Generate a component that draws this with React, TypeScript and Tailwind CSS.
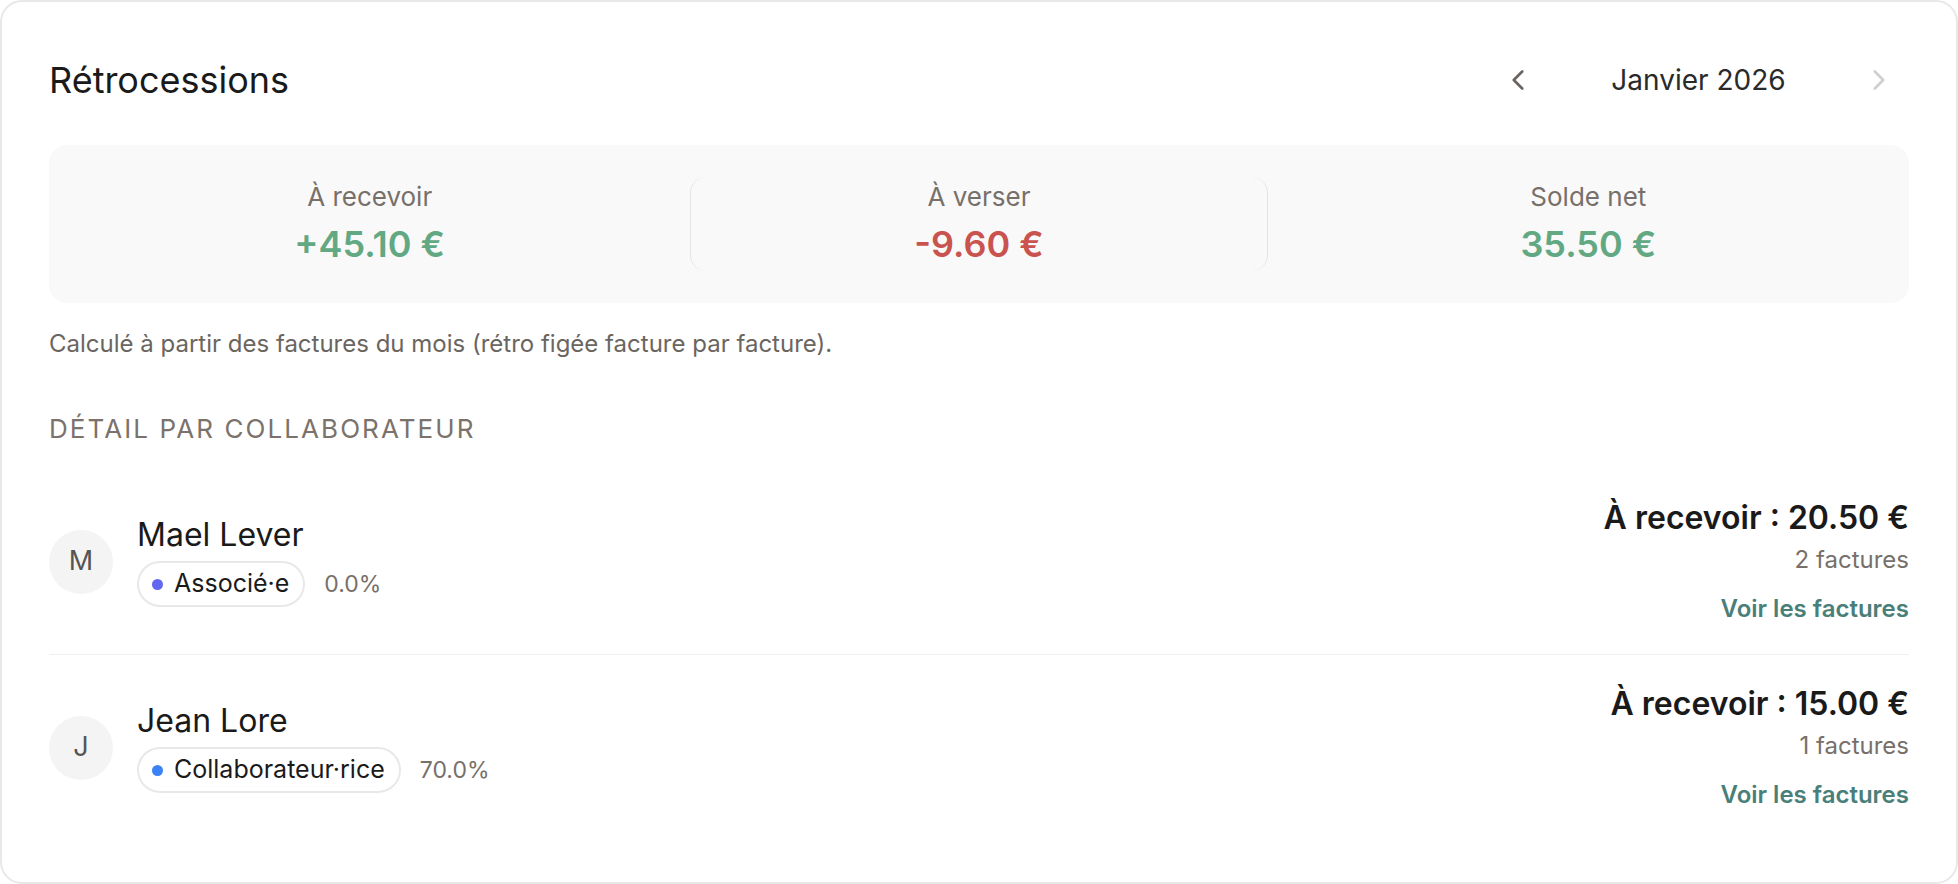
import { ChevronLeft, ChevronRight } from 'lucide-react';

interface Collaborator {
  initial: string;
  name: string;
  role: string;
  dot: string;
  rate: string;
  amount: string;
  invoices: string;
}

const collaborators: Collaborator[] = [
  {
    initial: 'M',
    name: 'Mael Lever',
    role: 'Associé·e',
    dot: 'bg-[#6366f1]',
    rate: '0.0%',
    amount: 'À recevoir : 20.50 €',
    invoices: '2 factures'
  },
  {
    initial: 'J',
    name: 'Jean Lore',
    role: 'Collaborateur·rice',
    dot: 'bg-[#3b82f6]',
    rate: '70.0%',
    amount: 'À recevoir : 15.00 €',
    invoices: '1 factures'
  }
];

function SummaryCell({
  label,
  value,
  tone,
  bordered
}: {
  label: string;
  value: string;
  tone: string;
  bordered?: boolean;
}): JSX.Element {
  return (
    <div
      className={`flex flex-col items-center pt-[4px] pb-[5px] ${
        bordered ? 'rounded-2xl border-x border-[#e6e4e2]' : ''
      }`}
    >
      <div className="text-[26px] leading-[32px] text-[#77706a]">{label}</div>
      <div className={`mt-[9px] text-[36px] font-semibold leading-[44px] ${tone}`}>{value}</div>
    </div>
  );
}

function CollaboratorRow({ c, last }: { c: Collaborator; last: boolean }): JSX.Element {
  return (
    <div className={`flex items-center justify-between py-[29px] ${last ? '' : 'border-b border-[#efefef]'}`}>
      <div className="flex items-center gap-[24px]">
        <div className="flex h-[64px] w-[64px] items-center justify-center rounded-full bg-[#f4f4f4] text-[27px] text-[#555]">
          {c.initial}
        </div>
        <div className="flex flex-col">
          <div className="text-[32px] leading-[38px] text-[#1a1a1a]">{c.name}</div>
          <div className="mt-[7px] flex items-center gap-[19px]">
            <span className="flex h-[46px] items-center gap-[11px] rounded-full border-2 border-[#e8e8e8] pl-[13px] pr-[14px] text-[25px] text-[#1a1a1a]">
              <span className={`h-[11px] w-[11px] rounded-full ${c.dot}`} />
              {c.role}
            </span>
            <span className="text-[23px] text-[#77706a]">{c.rate}</span>
          </div>
        </div>
      </div>
      <div className="flex flex-col items-end">
        <div className="text-[32px] font-semibold leading-[40px] text-[#1a1a1a]">{c.amount}</div>
        <div className="mt-[6px] text-[24px] leading-[32px] text-[#77706a]">{c.invoices}</div>
        <button type="button" className="mt-[17px] text-[24px] font-semibold leading-[32px] text-[#4a7f79]">
          Voir les factures
        </button>
      </div>
    </div>
  );
}

export default function App(): JSX.Element {
  return (
    <div className="h-[884px] w-full bg-white font-['Inter',sans-serif]">
      <div className="h-full rounded-[22px] border-2 border-[#e8e8e8] bg-white px-[47px] pt-[46px]">
        <div className="flex h-[64px] items-center justify-between">
          <h1 className="text-[36px] font-normal text-[#1a1a1a]">Rétrocessions</h1>
          <div className="mr-[10px] flex items-center gap-[40px]">
            <button type="button" className="flex h-10 w-10 items-center justify-center text-[#6b6560]">
              <ChevronLeft size={34} strokeWidth={1.9} />
            </button>
            <div className="w-[241px] text-center text-[28px] font-normal text-[#2a2a2a]">Janvier 2026</div>
            <button type="button" className="flex h-10 w-10 items-center justify-center text-[#cfcfcf]">
              <ChevronRight size={34} strokeWidth={1.9} />
            </button>
          </div>
        </div>

        <div className="mt-[33px] grid grid-cols-3 gap-8 rounded-[18px] bg-[#f9f9f9] p-8">
          <SummaryCell label="À recevoir" value="+45.10 €" tone="text-[#62a882]" />
          <SummaryCell label="À verser" value="-9.60 €" tone="text-[#c9534f]" bordered />
          <SummaryCell label="Solde net" value="35.50 €" tone="text-[#62a882]" />
        </div>

        <p className="mt-[25px] text-[24px] leading-[32px] text-[#6b6560]">
          Calculé à partir des factures du mois (rétro figée facture par facture).
        </p>

        <h2 className="mt-[52px] text-[26px] font-normal uppercase leading-[34px] tracking-[0.08em] text-[#7a726b]">
          Détail par collaborateur
        </h2>

        <div className="mt-[23px]">
          {collaborators.map((c, i) => (
            <CollaboratorRow key={c.name} c={c} last={i === collaborators.length - 1} />
          ))}
        </div>
      </div>
    </div>
  );
}
